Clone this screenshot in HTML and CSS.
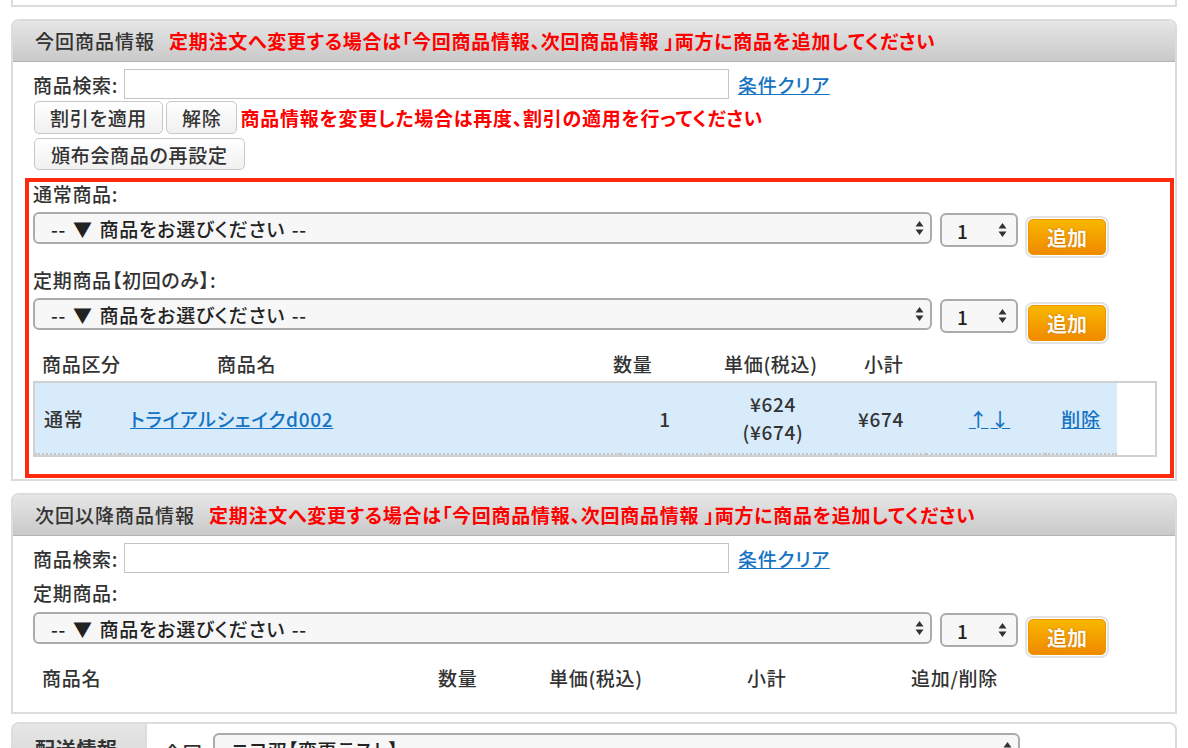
FILE: index.html
```html
<!DOCTYPE html>
<html lang="ja">
<head>
    <meta charset="UTF-8">
    <meta name="viewport" content="width=device-width, initial-scale=1.0">
    <title>受注編集 - 商品情報</title>
    <link rel="stylesheet" href="styles.css">
</head>
<body>
    <div class="page">
        <div class="panel panel-cut"></div>

        <!-- 今回商品情報 -->
        <section class="panel">
            <h2 class="panel-head">今回商品情報<span class="note">定期注文へ変更する場合は「今回商品情報、次回商品情報 」両方に商品を追加してください</span></h2>
            <div class="panel-body">
                <div class="search-row">
                    <label class="search-label">商品検索:</label>
                    <input class="search" type="text">
                    <a href="#" class="link clear">条件クリア</a>
                </div>
                <div class="btn-row">
                    <button class="btn">割引を適用</button>
                    <button class="btn">解除</button>
                    <span class="note">商品情報を変更した場合は再度、割引の適用を行ってください</span>
                </div>
                <div class="btn-row btn-row2">
                    <button class="btn btn-wide">頒布会商品の再設定</button>
                </div>

                <div class="red-box">
                    <div class="field-label">通常商品:</div>
                    <div class="pick-row">
                        <div class="select product">
                            <span>-- ▼ 商品をお選びください --</span>
                            <svg width="9" height="16" viewBox="0 0 9 16"><path d="M4.5 1L8.5 6.5H0.5Z M4.5 15L8.5 9.5H0.5Z" fill="#333"/></svg>
                        </div>
                        <div class="select qty">
                            <span>1</span>
                            <svg width="9" height="16" viewBox="0 0 9 16"><path d="M4.5 1L8.5 6.5H0.5Z M4.5 15L8.5 9.5H0.5Z" fill="#333"/></svg>
                        </div>
                        <button class="add">追加</button>
                    </div>

                    <div class="field-label field-gap">定期商品【初回のみ】:</div>
                    <div class="pick-row">
                        <div class="select product">
                            <span>-- ▼ 商品をお選びください --</span>
                            <svg width="9" height="16" viewBox="0 0 9 16"><path d="M4.5 1L8.5 6.5H0.5Z M4.5 15L8.5 9.5H0.5Z" fill="#333"/></svg>
                        </div>
                        <div class="select qty">
                            <span>1</span>
                            <svg width="9" height="16" viewBox="0 0 9 16"><path d="M4.5 1L8.5 6.5H0.5Z M4.5 15L8.5 9.5H0.5Z" fill="#333"/></svg>
                        </div>
                        <button class="add">追加</button>
                    </div>

                    <div class="thead thead-now">
                        <span>商品区分</span>
                        <span>商品名</span>
                        <span>数量</span>
                        <span>単価(税込)</span>
                        <span>小計</span>
                    </div>
                    <div class="item-box">
                        <table class="items">
                            <colgroup>
                                <col style="width:85px"><col style="width:500px"><col style="width:90px"><col style="width:126px"><col style="width:90px"><col style="width:119px"><col style="width:72px">
                            </colgroup>
                            <tr>
                                <td class="c-kind">通常</td>
                                <td class="c-name"><a href="#" class="link">トライアルシェイクd002</a></td>
                                <td class="c-mid">1</td>
                                <td class="c-mid c-price">¥624<br>(¥674)</td>
                                <td class="c-mid">¥674</td>
                                <td class="c-mid c-move"><a href="#" class="link arrow">↑</a><a href="#" class="link arrow">↓</a></td>
                                <td class="c-mid"><a href="#" class="link">削除</a></td>
                            </tr>
                        </table>
                    </div>
                </div>
            </div>
        </section>

        <!-- 次回以降商品情報 -->
        <section class="panel">
            <h2 class="panel-head">次回以降商品情報<span class="note">定期注文へ変更する場合は「今回商品情報、次回商品情報 」両方に商品を追加してください</span></h2>
            <div class="panel-body next-body">
                <div class="search-row">
                    <label class="search-label">商品検索:</label>
                    <input class="search" type="text">
                    <a href="#" class="link clear">条件クリア</a>
                </div>
                <div class="field-label field-next">定期商品:</div>
                <div class="pick-row">
                    <div class="select product">
                        <span>-- ▼ 商品をお選びください --</span>
                        <svg width="9" height="16" viewBox="0 0 9 16"><path d="M4.5 1L8.5 6.5H0.5Z M4.5 15L8.5 9.5H0.5Z" fill="#333"/></svg>
                    </div>
                    <div class="select qty">
                        <span>1</span>
                        <svg width="9" height="16" viewBox="0 0 9 16"><path d="M4.5 1L8.5 6.5H0.5Z M4.5 15L8.5 9.5H0.5Z" fill="#333"/></svg>
                    </div>
                    <button class="add">追加</button>
                </div>
                <div class="thead thead-next">
                    <span>商品名</span>
                    <span>数量</span>
                    <span>単価(税込)</span>
                    <span>小計</span>
                    <span>追加/削除</span>
                </div>
            </div>
        </section>

        <!-- 配送情報 -->
        <section class="panel panel-ship">
            <div class="ship-tab">配送情報</div>
            <div class="ship-body">
                <span class="ship-label">今回</span>
                <div class="select ship-select">
                    <span>ニコ双【変更テスト】</span>
                    <svg width="9" height="16" viewBox="0 0 9 16"><path d="M4.5 1L8.5 6.5H0.5Z M4.5 15L8.5 9.5H0.5Z" fill="#333"/></svg>
                </div>
            </div>
        </section>
    </div>
</body>
</html>
```

FILE: styles.css
```css
body{
    margin: 0;
    font-family: "Noto Sans CJK JP", "Noto Sans", sans-serif;
    font-size: 19px;
    font-weight: 500;
    letter-spacing: 0.7px;
    color: #333;
    background: #fff;
    font-feature-settings: "palt";
}
.page{
    padding: 0 11px;
}
.panel{
    border: 2px solid #dcdcdc;
    border-radius: 8px 8px 0 0;
    overflow: hidden;
    margin-top: 12px;
}
.panel-cut{
    margin-top: 0;
    height: 5px;
    border-top: none;
    border-radius: 0;
}
.panel-head{
    margin: 0;
    height: 40px;
    line-height: 40px;
    padding-left: 22px;
    font-size: 19px;
    font-weight: 500;
    letter-spacing: 1px;
    color: #333;
    background: linear-gradient(#e6e6e6, #c9c9c9);
    border-bottom: 1px solid #b4b4b4;
}
.panel-head .note{
    margin-left: 14px;
}
.note{
    color: #f00;
    font-weight: bold;
    letter-spacing: 0.75px;
}
.panel-body{
    padding: 7px 1px 0 12px;
}
.search-row{
    display: flex;
    align-items: center;
    height: 30px;
    padding-left: 8px;
}
.search-label{
    width: 91px;
}
.search{
    box-sizing: border-box;
    width: 605px;
    height: 30px;
    border: 1px solid #c4c4c4;
    margin: 0;
}
.link{
    color: #1673c3;
    text-decoration: underline;
}
.clear{
    margin-left: 9px;
}
.btn-row{
    display: flex;
    align-items: center;
    padding-left: 9px;
    margin-top: 2px;
}
.btn-row2{
    margin-top: 4px;
}
.btn{
    box-sizing: border-box;
    height: 33px;
    padding: 0 15px;
    margin-right: 3px;
    font-family: inherit;
    font-size: 19px;
    font-weight: 500;
    letter-spacing: 0.7px;
    color: #333;
    border: 1px solid #c8c8c8;
    border-radius: 5px;
    background: linear-gradient(#fff, #f0f0f0);
    font-feature-settings: "palt";
}
.btn-wide{
    height: 32px;
    padding: 0 16px;
}
.red-box{
    margin-top: 8px;
    margin-bottom: 1px;
    border: 4px solid #ff2a0d;
    padding: 1px 0 17px 4px;
}
.field-label{
    height: 22px;
    line-height: 22px;
}
.field-gap{
    margin-top: 11px;
}
.pick-row{
    display: flex;
    align-items: flex-start;
    height: 46px;
    margin-top: 7px;
}
.select{
    box-sizing: border-box;
    display: flex;
    align-items: center;
    justify-content: space-between;
    height: 32px;
    border: 2px solid #ababab;
    border-radius: 6px;
    background: #f7f7f7;
    color: #222;
}
.product{
    width: 899px;
    padding: 0 6px 0 16px;
    word-spacing: 2px;
}
.qty{
    width: 78px;
    height: 34px;
    margin: 1px 0 0 8px;
    padding: 0 9px 0 15px;
}
.add{
    box-sizing: border-box;
    width: 78px;
    height: 36px;
    margin: 7px 0 0 10px;
    padding: 0;
    font-family: inherit;
    font-size: 20px;
    font-weight: bold;
    color: #fff8ec;
    text-shadow: 0 0 2px #b86300;
    border: 1px solid #ee9200;
    border-radius: 5px;
    background: linear-gradient(#f8b700, #f18a00);
    box-shadow: 0 0 0 1px #fff, 0 0 0 3px #e2e2e2;
}
.thead{
    display: flex;
    height: 22px;
    line-height: 22px;
    margin-top: 9px;
    padding-left: 9px;
}
.thead-now span:nth-child(1){ width: 175px; }
.thead-now span:nth-child(2){ width: 396px; }
.thead-now span:nth-child(3){ width: 111px; }
.thead-now span:nth-child(4){ width: 140px; }
.item-box{
    width: 1124px;
    margin-top: 6px;
    border: 2px solid #d0d0d0;
    box-sizing: border-box;
    height: 76px;
}
.items{
    width: 1082px;
    border-collapse: collapse;
    table-layout: fixed;
    background: #d7ebfb;
}
.items td{
    height: 70px;
    padding: 0;
    border-bottom: 2px dotted #c6c6c6;
    color: #333;
}
.c-kind{
    padding-left: 9px !important;
}
.c-name{
    padding-left: 10px !important;
}
.c-mid{
    text-align: center;
}
.c-price{
    line-height: 28px;
}
.c-move{
    padding-left: 8px !important;
}
.arrow{
    margin: 0 1px;
}
.next-body{
    padding-bottom: 23px;
}
.field-next{
    margin-top: 9px;
    padding-left: 8px;
}
.next-body .pick-row{
    margin-top: 8px;
    padding-left: 8px;
}
.next-body .thead{
    margin-top: 9px;
    padding-left: 17px;
}
.thead-next span:nth-child(1){ width: 396px; }
.thead-next span:nth-child(2){ width: 111px; }
.thead-next span:nth-child(3){ width: 198px; }
.thead-next span:nth-child(4){ width: 164px; }
.panel-ship{
    display: flex;
    height: 70px;
    margin-top: 8px;
}
.ship-tab{
    width: 134px;
    padding: 10px 0 0 22px;
    box-sizing: border-box;
    font-size: 20px;
    font-weight: bold;
    color: #333;
    background: linear-gradient(#e6e6e6, #cfcfcf);
    border-right: 2px solid #dcdcdc;
}
.ship-body{
    display: flex;
    align-items: flex-start;
    padding: 9px 0 0 16px;
}
.ship-label{
    width: 50px;
    padding-top: 6px;
}
.ship-select{
    width: 807px;
    padding: 0 6px 0 16px;
}
```
